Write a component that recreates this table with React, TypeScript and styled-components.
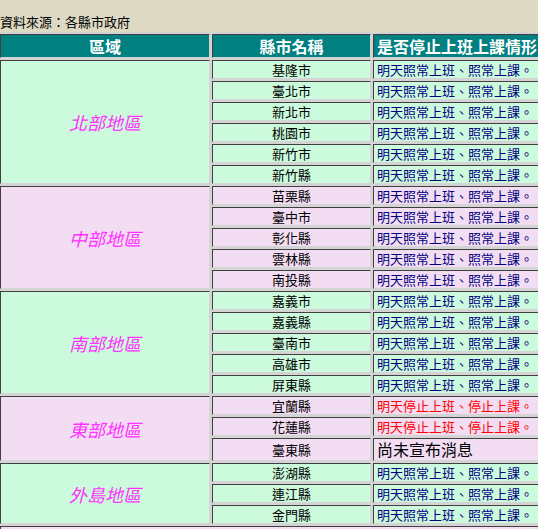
import React from "react";
import styled, { createGlobalStyle } from "styled-components";

const GlobalStyle = createGlobalStyle`
  html, body {
    margin: 0;
    padding: 0;
    background: #ddd9c3;
    overflow: hidden;
  }
  body {
    font-family: "Noto Sans CJK TC", "Noto Sans", sans-serif;
  }
`;

const Page = styled.div`
  width: 538px;
  height: 529px;
  overflow: hidden;
`;

const Source = styled.div`
  padding-top: 15px;
  margin-bottom: 4px;
  font-size: 13px;
  line-height: 13px;
  height: 13px;
  color: #000;
  white-space: nowrap;
`;

const Table = styled.table`
  border-collapse: separate;
  border-spacing: 2px;
  background: #d4d4d4;
  table-layout: fixed;
  width: 700px;
  margin-left: -2px;
`;

const Head = styled.th<{ $w: number; $align?: string }>`
  box-sizing: border-box;
  width: ${(p) => p.$w}px;
  height: 24px;
  padding: 0 3px;
  background: #008080;
  color: #fff;
  font-size: 16px;
  font-weight: bold;
  line-height: 22px;
  text-align: ${(p) => p.$align || "center"};
  white-space: nowrap;
  overflow: hidden;
  border: 1px solid;
  border-color: #404040 #d4d4d4 #d4d4d4 #404040;
`;

const Cell = styled.td<{ $bg: string }>`
  box-sizing: border-box;
  padding: 0;
  background: ${(p) => p.$bg};
  border: 1px solid;
  border-color: #404040 #d4d4d4 #d4d4d4 #404040;
  white-space: nowrap;
  overflow: hidden;
`;

const RegionCell = styled(Cell)`
  text-align: center;
  vertical-align: middle;
  color: #ff33ff;
  font-size: 18px;
  font-style: italic;
`;

const CityCell = styled(Cell)<{ $tall?: boolean }>`
  height: ${(p) => (p.$tall ? 23 : 19)}px;
  text-align: center;
  font-size: 13px;
  line-height: 17px;
  color: #000;
`;

const StatusCell = styled(Cell)<{ $tone: "normal" | "stop" | "none" }>`
  padding-left: 3px;
  font-size: ${(p) => (p.$tone === "none" ? 16 : 13)}px;
  line-height: ${(p) => (p.$tone === "none" ? 21 : 17)}px;
  color: ${(p) =>
    p.$tone === "stop" ? "#ff0000" : p.$tone === "none" ? "#000" : "#000080"};
`;

const FooterCell = styled(Cell)`
  height: 19px;
`;

const GREEN = "#ccfadc";
const PINK = "#f3ddf3";

type Tone = "normal" | "stop" | "none";
const TEXT: Record<Tone, string> = {
  normal: "明天照常上班、照常上課。",
  stop: "明天停止上班、停止上課。",
  none: "尚未宣布消息",
};

const regions: { name: string; bg: string; cities: [string, Tone][] }[] = [
  {
    name: "北部地區",
    bg: GREEN,
    cities: [
      ["基隆市", "normal"],
      ["臺北市", "normal"],
      ["新北市", "normal"],
      ["桃園市", "normal"],
      ["新竹市", "normal"],
      ["新竹縣", "normal"],
    ],
  },
  {
    name: "中部地區",
    bg: PINK,
    cities: [
      ["苗栗縣", "normal"],
      ["臺中市", "normal"],
      ["彰化縣", "normal"],
      ["雲林縣", "normal"],
      ["南投縣", "normal"],
    ],
  },
  {
    name: "南部地區",
    bg: GREEN,
    cities: [
      ["嘉義市", "normal"],
      ["嘉義縣", "normal"],
      ["臺南市", "normal"],
      ["高雄市", "normal"],
      ["屏東縣", "normal"],
    ],
  },
  {
    name: "東部地區",
    bg: PINK,
    cities: [
      ["宜蘭縣", "stop"],
      ["花蓮縣", "stop"],
      ["臺東縣", "none"],
    ],
  },
  {
    name: "外島地區",
    bg: GREEN,
    cities: [
      ["澎湖縣", "normal"],
      ["連江縣", "normal"],
      ["金門縣", "normal"],
    ],
  },
];

export default function App() {
  return (
    <Page>
      <GlobalStyle />
      <Source>資料來源：各縣市政府</Source>
      <Table>
        <thead>
          <tr>
            <Head $w={210}>區域</Head>
            <Head $w={159}>縣市名稱</Head>
            <Head $w={325} $align="left">
              是否停止上班上課情形
            </Head>
          </tr>
        </thead>
        <tbody>
          {regions.map((r) =>
            r.cities.map(([city, tone], i) => (
              <tr key={city}>
                {i === 0 && (
                  <RegionCell $bg={r.bg} rowSpan={r.cities.length}>
                    {r.name}
                  </RegionCell>
                )}
                <CityCell $bg={r.bg} $tall={tone === "none"}>
                  {city}
                </CityCell>
                <StatusCell $bg={r.bg} $tone={tone}>
                  {TEXT[tone]}
                </StatusCell>
              </tr>
            ))
          )}
          <tr>
            <FooterCell $bg={PINK} colSpan={3} />
          </tr>
        </tbody>
      </Table>
    </Page>
  );
}
